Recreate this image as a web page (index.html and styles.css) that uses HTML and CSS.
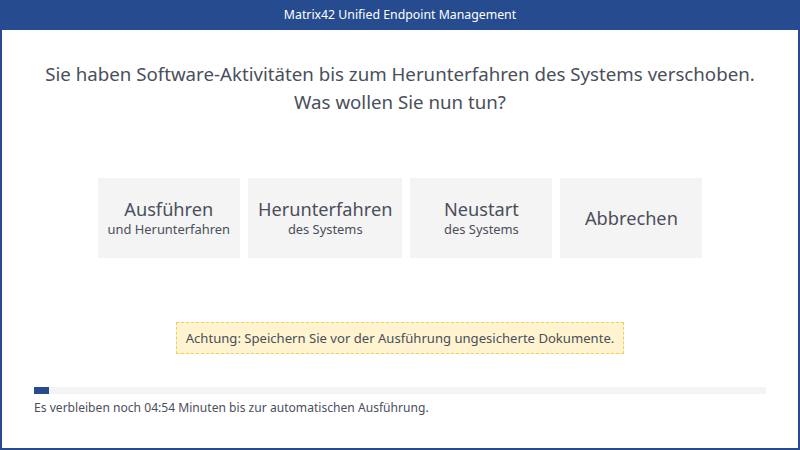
FILE: index.html
```html
<!DOCTYPE html>
<html lang="de">
<head>
    <meta charset="UTF-8">
    <meta name="viewport" content="width=device-width, initial-scale=1.0">
    <title>Matrix42 Unified Endpoint Management</title>
    <link rel="stylesheet" href="styles.css">
</head>
<body>
    <div class="window">
        <div class="titlebar">Matrix42 Unified Endpoint Management</div>

        <div class="content">
            <h1 class="question">
                Sie haben Software-Aktivitäten bis zum Herunterfahren des Systems verschoben.<br>
                Was wollen Sie nun tun?
            </h1>

            <div class="actions">
                <button class="action">
                    <span class="main">Ausführen</span>
                    <span class="sub">und Herunterfahren</span>
                </button>
                <button class="action">
                    <span class="main">Herunterfahren</span>
                    <span class="sub">des Systems</span>
                </button>
                <button class="action">
                    <span class="main">Neustart</span>
                    <span class="sub">des Systems</span>
                </button>
                <button class="action">
                    <span class="main">Abbrechen</span>
                </button>
            </div>

            <div class="warning">Achtung: Speichern Sie vor der Ausführung ungesicherte Dokumente.</div>

            <div class="progress">
                <div class="progress-fill" style="width: 2%"></div>
            </div>
            <p class="countdown">Es verbleiben noch 04:54 Minuten bis zur automatischen Ausführung.</p>
        </div>
    </div>
</body>
</html>
```

FILE: styles.css
```css
* {
    margin: 0;
    padding: 0;
    box-sizing: border-box;
}

body {
    font-family: "Noto Sans", "Open Sans", sans-serif;
    color: #4a4f5b;
    background: #ffffff;
}

.window {
    width: 800px;
    height: 450px;
    border: 2px solid #264c8f;
    border-top: none;
    display: flex;
    flex-direction: column;
}

.titlebar {
    height: 30px;
    margin: 0 -2px;
    background: #264c8f;
    color: #ffffff;
    font-size: 12.3px;
    line-height: 30px;
    text-align: center;
}

.content {
    flex: 1;
    padding: 30px 32px 0;
}

.question {
    font-size: 18.7px;
    font-weight: normal;
    line-height: 28px;
    text-align: center;
}

.actions {
    display: flex;
    justify-content: center;
    gap: 8px;
    margin-top: 62px;
}

.action {
    min-width: 142px;
    height: 80px;
    padding: 0 10px;
    border: none;
    background: #f4f4f4;
    color: inherit;
    font-family: inherit;
    display: flex;
    flex-direction: column;
    align-items: center;
    justify-content: center;
    cursor: pointer;
}

.action .main {
    font-size: 18.2px;
    line-height: 22px;
}

.action .sub {
    font-size: 12.9px;
    line-height: 18px;
}

.warning {
    width: 448px;
    height: 32px;
    margin: 64px auto 0;
    background: #fff4cf;
    border: 1px dashed #f2cf5a;
    font-size: 13.1px;
    line-height: 30px;
    text-align: center;
}

.progress {
    height: 7px;
    margin-top: 33px;
    background: #f4f4f4;
}

.progress-fill {
    height: 100%;
    background: #264c8f;
}

.countdown {
    font-size: 12.1px;
    line-height: 16px;
    margin-top: 6px;
}
```
